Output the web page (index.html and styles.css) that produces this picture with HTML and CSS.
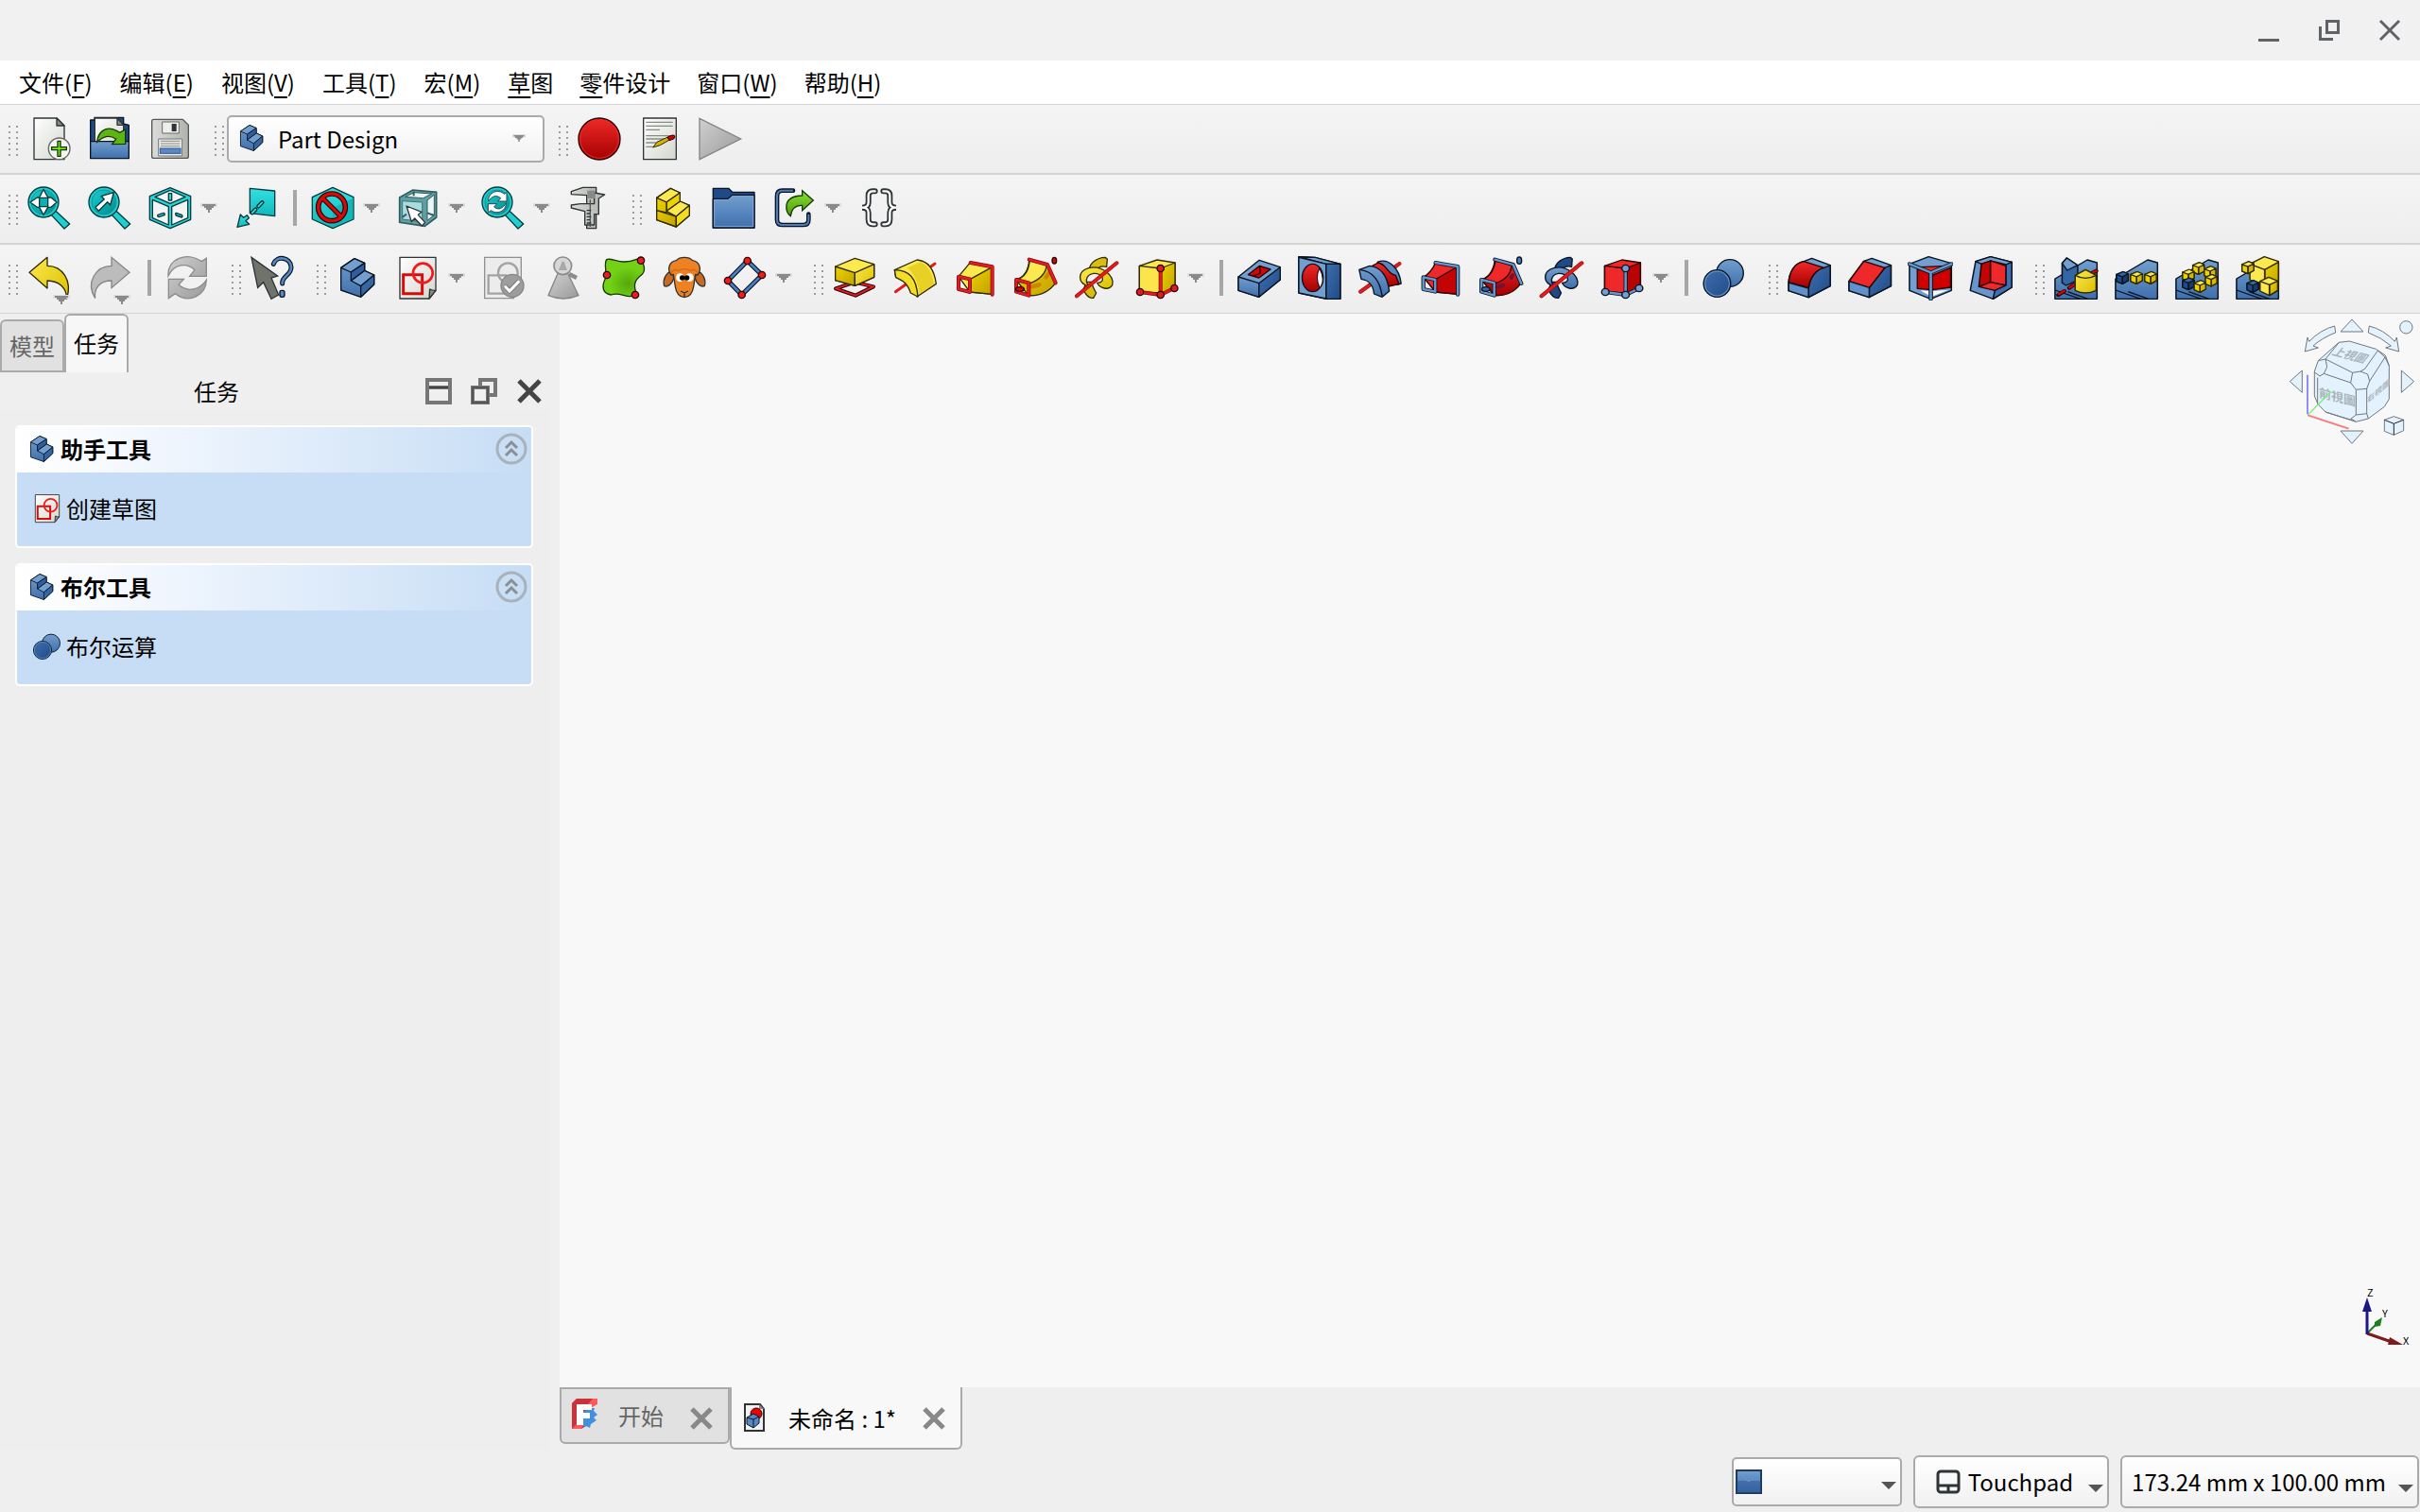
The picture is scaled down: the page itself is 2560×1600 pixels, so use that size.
FILE: index.html
```html
<!DOCTYPE html>
<html lang="zh-CN">
<head>
<meta charset="utf-8">
<title>Part Design</title>
<link rel="stylesheet" href="styles.css">
</head>
<body>
<svg class="defs" aria-hidden="true">
<defs>
<linearGradient id="gy" x1="0" y1="0" x2="1" y2="1"><stop offset="0" stop-color="#fce94f"/><stop offset="1" stop-color="#dcc000"/></linearGradient>
<linearGradient id="gyd" x1="0" y1="0" x2="1" y2="1"><stop offset="0" stop-color="#edd400"/><stop offset="1" stop-color="#c4a000"/></linearGradient>
<linearGradient id="gb" x1="0" y1="0" x2="0" y2="1"><stop offset="0" stop-color="#729fcf"/><stop offset="1" stop-color="#3f6fae"/></linearGradient>
<linearGradient id="gbd" x1="0" y1="0" x2="1" y2="1"><stop offset="0" stop-color="#3f6fae"/><stop offset="1" stop-color="#204a87"/></linearGradient>
<linearGradient id="gr" x1="0" y1="0" x2="0" y2="1"><stop offset="0" stop-color="#ef2929"/><stop offset="1" stop-color="#a40000"/></linearGradient>
<linearGradient id="gc" x1="0" y1="0" x2="0" y2="1"><stop offset="0" stop-color="#34e0e2"/><stop offset="1" stop-color="#0fb8bb"/></linearGradient>
<linearGradient id="gcd" x1="0" y1="0" x2="1" y2="1"><stop offset="0" stop-color="#16d0d2"/><stop offset="1" stop-color="#068a8c"/></linearGradient>
<linearGradient id="gg" x1="0" y1="0" x2="0" y2="1"><stop offset="0" stop-color="#8ae234"/><stop offset="1" stop-color="#4e9a06"/></linearGradient>
<linearGradient id="gn" x1="0" y1="0" x2="1" y2="1"><stop offset="0" stop-color="#d0d0d0"/><stop offset="1" stop-color="#9a9a9a"/></linearGradient>
<linearGradient id="gp" x1="0" y1="0" x2="1" y2="1"><stop offset="0" stop-color="#ffffff"/><stop offset="1" stop-color="#d3d7cf"/></linearGradient>
<linearGradient id="gm" x1="0" y1="0" x2="1" y2="0"><stop offset="0" stop-color="#dcdcda"/><stop offset="1" stop-color="#b0b3ac"/></linearGradient>
<radialGradient id="ggr" cx=".6" cy=".65" r=".45"><stop offset="0" stop-color="#56a80a"/><stop offset="1" stop-color="#73d216"/></radialGradient>

<symbol id="handle" viewBox="0 0 26 48"><path d="M15 10h2v2h-2zM15 16h2v2h-2zM15 22h2v2h-2zM15 28h2v2h-2zM15 34h2v2h-2zM15 40h2v2h-2zM23 10h2v2h-2zM23 16h2v2h-2zM23 22h2v2h-2zM23 28h2v2h-2zM23 34h2v2h-2zM23 40h2v2h-2z" fill="#9c9c9c"/></symbol>
<symbol id="arrow" viewBox="0 0 18 10"><path d="M0 0H18V4H0z" fill="#dedede"/><path d="M2 1H16V3H14V5H12V7H10V10H8V7H6V5H4V3H2z" fill="#8a8a8a"/></symbol>

<symbol id="new" viewBox="84 36 144 144"><path d="M108 42H180L204 66V173H108Z" class="k" fill="url(#gp)"/><path d="M180 42V66H204Z" class="k" fill="#888a85"/><circle cx="188" cy="139" r="34" fill="#f4f4f2" stroke="#666" stroke-width="4"/><path d="M183 115h9v19h19v9h-19v20h-9v-20h-19v-9h19z" fill="#73e61e" stroke="#173606" stroke-width="4"/></symbol>
<symbol id="open" viewBox="276 36 144 144"><path d="M287 48H300V40H392V60L409 64V120H287Z" class="b" fill="#204a87"/><path d="M301 42H372L392 64V130H301Z" class="k" fill="url(#gp)"/><path d="M372 42V64H392Z" class="k" fill="#888a85"/><path d="M287 116H409V170H287Z" class="b" fill="url(#gb)"/><path d="M308 118C311 86 335 64 370 82L380 88L398 78V124L356 125L368 108C345 94 328 100 308 118Z" fill="#5cb512" stroke="#173606" stroke-width="4"/></symbol>
<symbol id="save" viewBox="468 36 144 144"><path d="M488 46H580L598 64V164Q598 169 592 169H488Q482 169 482 164V52Q482 46 488 46Z" fill="url(#gm)" stroke="#555753" stroke-width="4"/><path d="M515 54H568V90H515Z" fill="#eee" stroke="#6b6d69" stroke-width="3"/><rect x="545" y="60" width="15" height="24" fill="#2e3436"/><path d="M503 108H578V162H503Z" fill="#e8e8e6" stroke="#777" stroke-width="3"/><path d="M510 115H571M510 123H571M510 131H571" stroke="#8c8e8a" stroke-width="3"/><rect x="508" y="138" width="65" height="16" fill="#5b87c4" stroke="#31599b" stroke-width="3"/></symbol>
<symbol id="rec" viewBox="390 36 144 144"><circle cx="462" cy="108" r="66" class="r" fill="url(#gr)"/><circle cx="462" cy="108" r="61" fill="none" stroke="#ef2929" stroke-width="3"/></symbol>
<symbol id="edit" viewBox="582 36 144 144"><path d="M602 42H706V173H602Z" class="k" fill="url(#gp)"/><path d="M610 55H695M610 67H695M610 79H654M610 98H690M610 108H670M610 120H650M610 133H632" stroke="#888a85" stroke-width="4"/><path d="M632 135L645 118L688 98L694 106L655 128Z" fill="#d5b208" stroke="#332900" stroke-width="3"/><path d="M678 103L694 96Q702 95 702 102L698 108L684 113Z" fill="#c00" stroke="#280000" stroke-width="3"/></symbol>
<symbol id="play" viewBox="774 36 144 144"><path d="M780 43L911 108L780 173Z" fill="url(#gn)" stroke="#858585" stroke-width="4"/></symbol>

<symbol id="lens" viewBox="0 0 144 144"><path d="M76 91L89 78L137 123L120 138Z" class="c" fill="#1fd0d3"/><circle cx="54" cy="54" r="48" class="c" fill="#19cdd0"/><circle cx="54" cy="54" r="39" fill="url(#gcd)" stroke="#0d9698" stroke-width="3"/></symbol>
<symbol id="fitall" viewBox="84 258 144 144"><use href="#lens" x="84" y="258" width="144" height="144"/><path d="M138 271L152 297H162L180 312L162 328H152L138 352L125 328H118L96 312L118 297H125Z" class="c" fill="#fff"/><rect x="125" y="298" width="27" height="28" class="c" fill="#0fb0b3"/></symbol>
<symbol id="fitsel" viewBox="276 258 144 144"><use href="#lens" x="276" y="258" width="144" height="144"/><path d="M361 281L350 321L341 311L313 340L303 328L331 302L321 293Z" class="c" fill="#fff"/></symbol>
<symbol id="iso" viewBox="468 258 144 144"><path d="M540 266L605 293V367L540 395L475 367V293Z" class="c" fill="#27d5d8"/><path d="M540 274L588 295L540 316L492 295ZM484 304L535 326V384L484 362ZM596 304L545 326V384L596 362Z" class="c" fill="#f4f4f4"/><path d="M535 284h10v22h-10zM501 352l18-6q6 2 3 7l-18 6q-6-2-3-7zM559 346l18 6q4 5 0 8l-18-6q-4-5 0-8z" class="c" fill="#27d5d8"/></symbol>
<symbol id="ortho" viewBox="738 258 144 144"><path d="M793 268L872 276V356L793 347Z" class="c" fill="url(#gc)"/><path d="M832 313L820 325M811 335L800 346" stroke="#082d2e" stroke-width="13" stroke-linecap="round"/><path d="M832 313L820 325M811 335L800 346" stroke="#34e0e2" stroke-width="5" stroke-linecap="round"/><path d="M753 391L763 351L773 361L784 353L790 362L780 371L791 382Z" class="c" fill="url(#gc)"/></symbol>
<symbol id="style" viewBox="984 258 144 144"><path d="M1056 265L1122 296V366L1056 395L991 366V296Z" class="c" fill="url(#gc)"/><path d="M1056 330L1120 300V364L1056 392Z" fill="#10b7ba"/><circle cx="1053" cy="328" r="43" fill="none" stroke="#280000" stroke-width="17"/><path d="M1023 298L1083 358" stroke="#280000" stroke-width="16"/><circle cx="1053" cy="328" r="43" fill="none" stroke="#d40a0a" stroke-width="10"/><path d="M1023 298L1083 358" stroke="#d40a0a" stroke-width="10"/></symbol>
<symbol id="selbox" viewBox="1254 258 144 144"><path d="M1268 297L1310 273L1385 280V360L1348 388L1268 376Z" fill="#5f9ea2" stroke="#315e61" stroke-width="5"/><path d="M1286 295L1314 281L1370 285L1343 299ZM1356 306L1378 288V352L1356 370Z" fill="#edf4f4" stroke="#315e61" stroke-width="3"/><path d="M1277 308L1340 312V374L1277 366Z" fill="#a8dcdf" stroke="#3f7477" stroke-width="3"/><path d="M1313 278V292M1276 360L1290 350M1356 346L1378 354" stroke="#315e61" stroke-width="6"/><path d="M1290 324L1338 343L1327 352L1349 376L1339 387L1316 363L1306 374Z" class="k" fill="#fff"/></symbol>
<symbol id="sync" viewBox="84 258 144 144"><use href="#lens" x="84" y="258" width="144" height="144"/><path d="M110 309C108 280 142 268 160 286L168 281V309H140L149 299C134 287 121 293 110 309ZM166 314C167 342 136 352 118 338L109 345V317H137L128 327C142 339 157 331 166 314Z" fill="#fff" stroke="#25474a" stroke-width="3"/></symbol>
<symbol id="caliper" viewBox="354 258 144 144"><path d="M373 278L410 265H452V395H422V290L373 287Z" fill="url(#gm)" class="k"/><path d="M373 321L402 317H446V282L479 288L460 300V350H446V384H416V341L373 330Z" fill="url(#gm)" class="k"/><path d="M424 275H448V300H424Z" fill="#888a85"/><path d="M433 304V390" stroke="#555" stroke-width="4"/><path d="M422 338H436M422 348H432M422 358H436M422 368H432M422 378H436" stroke="#2e3436" stroke-width="4"/></symbol>
<symbol id="partyellow" viewBox="624 258 144 144"><path d="M644 298L688 268L718 282V309L748 322V354L706 390L644 368Z" class="y" fill="url(#gyd)"/><path d="M644 298L688 268L718 282L675 312ZM675 340L718 309L748 322L706 357Z" class="y" fill="#fce94f"/><path d="M675 312L718 282V309L675 340Z" class="y" fill="#edd400"/><path d="M644 298L675 312V345L644 338ZM644 338L706 357V390L644 368Z" class="y" fill="url(#gyd)"/><path d="M706 357L748 322V354L706 390Z" class="y" fill="#f2dc1e"/></symbol>
<symbol id="folder" viewBox="816 258 144 144"><path d="M823 268H872L884 280H954V393H823Z" class="b" fill="#204a87"/><path d="M823 301H870L884 289H954V393H823Z" class="b" fill="url(#gb)"/><path d="M827 305H872L886 293H950V389H827Z" fill="none" stroke="#7ea7d6" stroke-width="3"/></symbol>
<symbol id="link" viewBox="1008 258 144 144"><path d="M1077 275H1042Q1026 275 1026 293V368Q1026 384 1044 384H1108Q1126 384 1126 368V350" fill="none" stroke="#0b1521" stroke-width="14" stroke-linecap="round"/><path d="M1077 275H1042Q1026 275 1026 293V368Q1026 384 1044 384H1108Q1126 384 1126 368V350" fill="none" stroke="#4a7ebf" stroke-width="6"/><path d="M1106 275L1141 306L1106 338V322Q1074 320 1069 356Q1053 345 1056 320Q1062 292 1106 291Z" fill="url(#gg)" stroke="#173606" stroke-width="4"/></symbol>
<symbol id="braces" viewBox="1278 258 144 144"><path d="M1337 277H1330Q1316 277 1316 291V313Q1316 329 1296 329Q1316 329 1316 345V367Q1316 382 1330 382H1337M1363 277H1370Q1384 277 1384 291V313Q1384 329 1404 329Q1384 329 1384 345V367Q1384 382 1370 382H1363" fill="none" stroke="#2e3436" stroke-width="18" stroke-linecap="round"/><path d="M1337 277H1330Q1316 277 1316 291V313Q1316 329 1296 329Q1316 329 1316 345V367Q1316 382 1330 382H1337M1363 277H1370Q1384 277 1384 291V313Q1384 329 1404 329Q1384 329 1384 345V367Q1384 382 1370 382H1363" fill="none" stroke="#fff" stroke-width="7" stroke-linecap="round"/></symbol>

<symbol id="undo" viewBox="84 480 144 144"><path d="M150 487V514C198 514 230 560 212 618C211 585 190 562 150 561V585L93 535Z" class="y" fill="url(#gy)"/></symbol>
<symbol id="redo" viewBox="276 480 144 144"><path d="M354 487V514C306 514 270 565 302 617C298 586 315 561 354 561V584L411 535Z" fill="#bcbcbc" stroke="#868686" stroke-width="4"/></symbol>
<symbol id="refresh" viewBox="522 480 144 144"><path d="M534 546C530 490 595 468 640 500L655 490V547H602L618 527C592 502 552 508 534 546ZM655 559C654 608 600 636 556 602L535 617V556H583L567 574C596 600 634 590 655 559Z" fill="url(#gn)" stroke="#8b8b8b" stroke-width="4"/></symbol>
<symbol id="what" viewBox="792 480 144 144"><path d="M798 487L881 546L861 552L884 606L861 619L836 566L818 583Z" fill="#70736c" stroke="#2e3436" stroke-width="4"/><path d="M868 508C878 480 922 486 924 518C925 545 894 545 896 570" fill="none" stroke="#0b1521" stroke-width="15" stroke-linecap="round"/><path d="M868 508C878 480 922 486 924 518C925 545 894 545 896 570" fill="none" stroke="#5688c4" stroke-width="8" stroke-linecap="round"/><rect x="888" y="592" width="15" height="21" rx="6" class="b" fill="#5688c4"/></symbol>
<symbol id="part" viewBox="1062 480 144 144"><path d="M1082 520L1125 491L1157 505V529L1187 543V573L1145 613L1082 591Z" class="b" fill="url(#gb)"/><path d="M1082 520L1125 491L1157 505L1114 534ZM1114 561L1157 529L1187 543L1145 578Z" class="b" fill="#729fcf"/><path d="M1114 534L1157 505V529L1114 561Z" class="b" fill="#2f5d9d"/><path d="M1145 578L1187 543V573L1145 613Z" class="b" fill="#3465a4"/></symbol>
<symbol id="sketch" viewBox="1254 480 144 144"><path d="M1269 487H1383V592L1362 618H1269Z" class="k" fill="url(#gp)"/><path d="M1362 618L1364 588Q1374 593 1383 592Z" class="k" fill="#888a85"/><path d="M1280 542H1340V602H1280Z" fill="none" stroke="#d80a0a" stroke-width="9"/><circle cx="1342" cy="537" r="31" fill="none" stroke="#ef1c1c" stroke-width="8"/></symbol>
<symbol id="validate" viewBox="84 480 144 144"><path d="M98 487H214V560L190 617H98Z" fill="#ececec" stroke="#909090" stroke-width="4"/><path d="M110 544H166V602H110Z" fill="none" stroke="#a2a2a2" stroke-width="7"/><circle cx="172" cy="536" r="31" fill="none" stroke="#a2a2a2" stroke-width="7"/><circle cx="186" cy="577" r="36" fill="#9d9d9d" stroke="#868686" stroke-width="4"/><path d="M162 578L177 594L208 562" fill="none" stroke="#787878" stroke-width="15"/><path d="M162 578L177 594L208 562" fill="none" stroke="#fff" stroke-width="9"/></symbol>
<symbol id="check" viewBox="276 480 144 144"><path d="M330 538H362L396 608Q348 628 300 608Z" fill="url(#gn)" stroke="#858585" stroke-width="4"/><path d="M366 540L390 552" stroke="#8b8b8b" stroke-width="13"/><circle cx="346" cy="514" r="28" fill="#d7d7d7" stroke="#8b8b8b" stroke-width="5"/><path d="M333 528L344 500H350L360 528Z" fill="#a8a8a8"/></symbol>
<symbol id="binder" viewBox="468 480 144 144"><path d="M485 494C505 486 530 514 580 493C600 486 612 525 598 541C568 563 572 580 580 604C552 624 530 594 500 606C472 602 468 580 482 552C487 530 475 510 485 494Z" fill="url(#ggr)" stroke="#173606" stroke-width="4"/><circle cx="594" cy="497" r="11" class="r" fill="#ef1c1c"/><circle cx="486" cy="543" r="11" class="r" fill="#ef1c1c"/><circle cx="576" cy="606" r="11" class="r" fill="#ef1c1c"/></symbol>
<symbol id="clone" viewBox="660 480 144 144"><path d="M694 530C674 534 662 558 668 578C680 582 692 572 698 554ZM770 530C790 534 802 558 796 578C784 582 772 572 766 554Z" class="k" fill="#c96a20"/><path d="M690 543C676 524 684 500 706 497C718 484 746 484 758 497C780 500 788 524 774 543L767 541L761 580Q756 612 732 614Q708 612 703 580L697 541Z" class="k" fill="#f08122"/><path d="M690 536Q700 520 712 530Q732 518 752 530Q764 520 774 536" fill="none" stroke="#c96a20" stroke-width="4"/><circle cx="718" cy="551" r="13" fill="#fff"/><circle cx="748" cy="551" r="13" fill="#fff"/><circle cx="725" cy="552" r="8"/><circle cx="740" cy="552" r="8"/><path d="M720 594L732 600L744 594M732 600V612" fill="none" class="k"/></symbol>
<symbol id="datum" viewBox="852 480 144 144"><path d="M932 498L978 543L914 606L870 561Z" fill="none" stroke="#0b1521" stroke-width="15"/><path d="M932 498L978 543L914 606L870 561Z" fill="none" stroke="#4a7ebf" stroke-width="8"/><circle cx="932" cy="498" r="11" class="r" fill="#ef1c1c"/><circle cx="978" cy="543" r="11" class="r" fill="#ef1c1c"/><circle cx="914" cy="606" r="11" class="r" fill="#ef1c1c"/><circle cx="870" cy="561" r="11" class="r" fill="#ef1c1c"/></symbol>

<symbol id="pad" viewBox="90 60 144 144"><path d="M102 166L163 146L222 160L165 188Z" fill="none" stroke="#280000" stroke-width="12" stroke-linejoin="round"/><path d="M102 166L163 146L222 160L165 188Z" fill="none" stroke="#e01b24" stroke-width="6" stroke-linejoin="round"/><path d="M101 96L163 70L224 89V130L163 157L101 140Z" class="y" fill="#fce94f"/><path d="M101 96L163 116V157L101 140Z" class="y" fill="url(#gyd)"/><path d="M163 116L224 89V130L163 157Z" class="y" fill="url(#gy)"/></symbol>
<symbol id="revolve" viewBox="282 60 144 144"><path d="M292 176L417 87" class="ax"/><path d="M289 107L360 75C395 78 415 105 421 151L360 192C352 160 335 140 293 130Z" class="y" fill="#fce94f"/><path d="M330 100L372 82C394 92 410 120 414 152L368 183C364 145 350 118 330 100Z" fill="#e0c414" opacity=".7"/><path d="M289 107C335 108 358 130 363 192L340 180C330 150 318 142 293 131Z" class="y" fill="#f4de2a"/></symbol>
<symbol id="loft" viewBox="474 60 144 144"><path d="M492 128L530 82L600 97V184L528 177Z" class="y" fill="#fce94f"/><path d="M528 137L600 97V184L528 177Z" class="y" fill="url(#gyd)"/><path d="M530 84L599 97V185M492 128L528 136V177L492 168Z" class="ro" fill="none"/><path d="M530 84L599 97V185M492 128L528 136V177L492 168Z" class="ri" fill="none"/></symbol>
<symbol id="pipe" viewBox="666 60 144 144"><path d="M674 138C700 130 714 110 716 74L774 90L800 148C775 182 745 190 714 188Z" class="y" fill="url(#gyd)"/><path d="M680 136C702 130 714 110 718 78L772 90C770 118 748 140 716 150Z" class="y" fill="#fce94f"/><path d="M725 160L748 154M770 130L778 118" stroke="#cf8206" stroke-width="13" stroke-linecap="round"/><path d="M716 74L774 90L800 148M675 138L715 148V188L675 176Z" class="ro" fill="none"/><path d="M716 74L774 90L800 148M675 138L715 148V188L675 176Z" class="ri" fill="none"/><ellipse cx="687" cy="168" rx="13" ry="7" class="r" fill="#d40a0a"/><ellipse cx="796" cy="77" rx="7" ry="10" class="r" fill="#d40a0a"/></symbol>
<symbol id="helix" viewBox="858 60 144 144"><path d="M906 106C910 85 930 68 957 67L964 72L962 97C940 92 930 104 926 112Z" class="y" fill="#d9bd10"/><path d="M900 145L888 168C895 185 905 198 920 196L929 180C920 165 916 155 914 145Z" class="y" fill="#d9bd10"/><path d="M908 160C868 150 868 112 905 101C945 90 988 125 980 155C968 174 940 165 932 148C962 148 950 116 920 118C892 124 894 148 908 160Z" class="y" fill="url(#gy)"/><path d="M867 190L994 85" class="axo"/><path d="M867 190L994 85" class="ax"/></symbol>
<symbol id="prim" viewBox="1050 60 144 144"><path d="M1066 94L1122 75L1179 84V158L1133 186L1066 177Z" class="y" fill="#fce94f"/><path d="M1133 102L1179 84V158L1133 186Z" class="y" fill="url(#gyd)"/><path d="M1066 94L1133 102V180L1066 177Z" class="y" fill="#fbe54a"/><path d="M1068 177L1133 186L1176 165M1133 186V102" class="ro" fill="none"/><path d="M1068 177L1133 186L1176 165M1133 186V102" class="ri" fill="none"/><g class="r" fill="#e01b24"><circle cx="1133" cy="102" r="11"/><circle cx="1068" cy="177" r="11"/><circle cx="1133" cy="186" r="11"/><circle cx="1177" cy="165" r="11"/></g></symbol>

<symbol id="pocket" viewBox="50.4 60 134.4 144" preserveAspectRatio="none"><path d="M56 129L118 76L180 98V138L117 193L56 172Z" class="b" fill="#729fcf"/><path d="M56 129L117 149V193L56 172Z" class="b" fill="url(#gb)"/><path d="M117 149L180 98V138L117 193Z" class="b" fill="url(#gbd)"/><path d="M85 122L119 94L151 105L117 132Z" class="r" fill="#cc0808"/><path d="M120 95V118L100 126" class="r" fill="none"/></symbol>
<symbol id="hole" viewBox="229.6 60 134.4 144" preserveAspectRatio="none"><path d="M235 65L283 67L358 88V199H316L235 180Z" class="b" fill="#4a7ebf"/><path d="M235 65L316 88L358 88L283 67Z" class="b" fill="#729fcf"/><path d="M235 67L316 88V198L235 180Z" class="b" fill="#729fcf"/><path d="M316 88H358V199H316Z" class="b" fill="url(#gbd)"/><ellipse cx="276" cy="132" rx="31" ry="44" class="b" fill="url(#gr)"/><path d="M296 101C309 125 309 150 297 164C288 145 288 120 296 101Z" fill="#f4f4ff" stroke="#280000" stroke-width="3"/></symbol>
<symbol id="groove" viewBox="408.8 60 134.4 144" preserveAspectRatio="none"><path d="M418 176L533 87" class="axo"/><path d="M418 176L533 87" class="ax"/><path d="M468 82C500 68 533 100 538 150L526 154C505 120 490 112 468 82Z" class="b" fill="#5688c4"/><path d="M446 98L470 84C496 88 496 120 522 124L532 152L498 160Q490 120 446 98Z" class="r" fill="url(#gr)"/><path d="M414 106L445 94C480 98 498 130 503 174L482 193L458 183C455 155 445 140 420 136Z" class="b" fill="url(#gb)"/><path d="M418 107C455 112 475 140 482 190" class="b" fill="none"/></symbol>
<symbol id="subloft" viewBox="588 60 134.4 144" preserveAspectRatio="none"><path d="M604 130Q630 112 640 83L706 96V184L640 177Z" class="r" fill="#ef2929"/><path d="M640 137L706 96V184L640 177Z" class="r" fill="#c40404"/><path d="M640 84L706 96V185M604 130L639 138V176L604 168Z" class="bo" fill="none"/><path d="M640 84L706 96V185M604 130L639 138V176L604 168Z" class="bi" fill="none"/></symbol>
<symbol id="subpipe" viewBox="767.2 60 134.4 144" preserveAspectRatio="none"><path d="M776 138C800 130 812 110 816 74L868 90L894 148C870 182 845 190 814 188Z" class="r" fill="url(#gr)"/><path d="M780 136C800 130 812 110 818 78L866 90C864 118 846 140 816 150Z" class="r" fill="#ef2929"/><path d="M826 160L840 156M864 132L868 124" stroke="#751037" stroke-width="12" stroke-linecap="round"/><path d="M816 74L870 90L894 150M776 138L814 148V188L776 176Z" class="bo" fill="none"/><path d="M816 74L870 90L894 150M776 138L814 148V188L776 176Z" class="bi" fill="none"/><ellipse cx="789" cy="168" rx="12" ry="7" class="b" fill="#3465a4"/><ellipse cx="888" cy="77" rx="7" ry="11" class="b" fill="#4a7ebf"/></symbol>
<symbol id="subhelix" viewBox="946.4 60 134.4 144" preserveAspectRatio="none"><path d="M992 106C996 85 1014 68 1039 67L1045 72L1043 97C1024 92 1014 104 1010 112Z" class="b" fill="#204a87"/><path d="M986 145L974 168C981 185 991 198 1004 196L1012 180C1004 165 1000 155 999 145Z" class="b" fill="#204a87"/><path d="M994 160C956 150 956 112 990 101C1027 90 1067 125 1060 155C1048 174 1023 165 1015 148C1044 148 1032 116 1004 118C978 124 980 148 994 160Z" class="b" fill="url(#gb)"/><path d="M954 190L1073 85" class="axo"/><path d="M954 190L1073 85" class="ax"/></symbol>
<symbol id="subprim" viewBox="1125.6 60 134.4 144" preserveAspectRatio="none"><path d="M1141 94L1192 75L1247 84V158L1203 186L1141 177Z" class="r" fill="#ef2929"/><path d="M1203 102L1247 84V158L1203 186Z" class="r" fill="#b80303"/><path d="M1141 94L1203 102V180L1141 177Z" class="r" fill="#ef2929"/><path d="M1143 177L1203 186L1244 165M1203 186V102" class="bo" fill="none"/><path d="M1143 177L1203 186L1244 165M1203 186V102" class="bi" fill="none"/><g class="b" fill="#729fcf"><circle cx="1203" cy="102" r="11"/><circle cx="1143" cy="177" r="11"/><circle cx="1203" cy="186" r="11"/><circle cx="1243" cy="165" r="11"/></g></symbol>
<symbol id="boolean" viewBox="1428 60 134.4 144" preserveAspectRatio="none"><ellipse cx="1512" cy="117" rx="40" ry="43" class="b" fill="url(#gb)"/><ellipse cx="1474" cy="150" rx="40" ry="43" class="b" fill="url(#gbd)"/><ellipse cx="1474" cy="150" rx="36" ry="39" fill="none" stroke="#6696cd" stroke-width="3"/></symbol>

<symbol id="fillet" viewBox="104.5 60 125.4 144" preserveAspectRatio="none"><path d="M110 147C112 115 125 85 152 80L174 70L225 92V158L165 194L110 173Z" class="b" fill="#729fcf"/><path d="M165 163C170 130 185 105 208 100L225 92V158L165 194Z" class="b" fill="url(#gbd)"/><path d="M110 147C112 115 125 85 152 80L208 100C185 105 170 130 165 163Z" class="r" fill="url(#gr)"/><path d="M110 147L165 165V194L110 173Z" class="b" fill="#5f92cc"/></symbol>
<symbol id="chamfer" viewBox="271.8 60 125.4 144" preserveAspectRatio="none"><path d="M277 143L318 79L340 70L393 92V158L332 194L277 173Z" class="b" fill="#729fcf"/><path d="M333 163L376 100L393 92V158L332 194Z" class="b" fill="url(#gbd)"/><path d="M277 143L318 79L376 100L333 163Z" class="r" fill="#ef2929"/><path d="M277 143L333 163V194L277 173Z" class="b" fill="#5f92cc"/></symbol>
<symbol id="draft" viewBox="439 60 125.4 144" preserveAspectRatio="none"><path d="M444 88L497 65L560 86V172L503 199L444 172Z" class="b" fill="#729fcf"/><path d="M466 103L503 120V170L466 166ZM507 124L558 100V162L507 170Z" class="r" fill="#d00000"/><path d="M470 98L550 94L503 114Z" class="r" fill="#ef2929"/><path d="M474 172L500 174V188ZM509 174L552 170L509 190Z" fill="#fff"/><path d="M444 88L503 115L560 88M503 115V199" fill="none" class="bo"/><path d="M444 88L503 115L560 88M503 115V199" fill="none" class="bi"/></symbol>
<symbol id="thick" viewBox="606.2 60 125.4 144" preserveAspectRatio="none"><path d="M627 80L668 65L727 82V162L675 199L612 172Z" class="b" fill="#6696cd"/><path d="M627 80L668 65L727 82L711 90L668 78L643 88Z" class="b" fill="#729fcf"/><path d="M643 88L668 78V146L636 160Z" class="r" fill="#c40404"/><path d="M668 78L711 94V156L668 146Z" class="r" fill="#ef2929"/><path d="M636 160L668 146L711 156L680 172Z" class="r" fill="#ef2929"/><path d="M680 172L711 156V90L727 82V162L675 199Z" class="b" fill="#3f6fae"/></symbol>

<symbol id="plane" viewBox="0 0 125.4 144" preserveAspectRatio="none"><path d="M5 75L94 15L121 24V139H5Z" class="b" fill="url(#gb)"/><path d="M5 111L75 139M40 116L96 139" class="b" fill="none"/></symbol>
<symbol id="cy" viewBox="0 0 36 42"><path d="M2 11L20 2L34 9V30L18 40L2 32Z" class="y" fill="#fce94f"/><path d="M18 18L34 9V30L18 40Z" class="y" fill="#d9b900"/><path d="M2 11L18 18V40L2 32Z" class="y" fill="#edd400"/></symbol>
<symbol id="cb" viewBox="0 0 36 42"><path d="M2 11L20 2L34 9V30L18 40L2 32Z" class="b" fill="#3465a4"/><path d="M18 18L34 9V30L18 40Z" class="b" fill="#173a70"/><path d="M2 11L18 18V40L2 32Z" class="b" fill="#204a87"/></symbol>
<symbol id="mirror" viewBox="841.4 60 125.4 144" preserveAspectRatio="none"><use href="#plane" x="841.4" y="60" width="125.4" height="144"/><path d="M866 86L879 69L909 92V140L877 156L866 148Z" class="b" fill="#3465a4"/><path d="M866 86L880 108L909 92L879 69Z" class="b" fill="#729fcf"/><path d="M856 186L872 174M886 164L898 154M950 116L960 110" stroke="#280000" stroke-width="12" stroke-linecap="round"/><path d="M857 184L872 174M887 163L898 154M951 115L960 110" stroke="#cc0808" stroke-width="7" stroke-linecap="round"/><path d="M902 124L931 106L960 124V172Q931 188 902 172Z" class="y" fill="url(#gy)"/><path d="M902 124Q931 142 960 124" class="y" fill="none"/></symbol>
<symbol id="linear" viewBox="1008.6 60 125.4 144" preserveAspectRatio="none"><use href="#plane" x="1008.6" y="60" width="125.4" height="144"/><use href="#cb" x="1014" y="110" width="37" height="43"/><use href="#cy" x="1053" y="110" width="37" height="43"/><use href="#cy" x="1092" y="110" width="37" height="43"/></symbol>
<symbol id="polar" viewBox="1175.9 60 125.4 144" preserveAspectRatio="none"><use href="#plane" x="1175.9" y="60" width="125.4" height="144"/><use href="#cy" x="1225" y="81" width="36" height="42"/><use href="#cy" x="1197" y="103" width="36" height="42"/><use href="#cy" x="1257" y="93" width="36" height="42"/><use href="#cy" x="1260" y="119" width="36" height="42"/><use href="#cb" x="1197" y="130" width="36" height="42"/><use href="#cy" x="1229" y="138" width="36" height="42"/></symbol>
<symbol id="multi" viewBox="1343.1 60 125.4 144" preserveAspectRatio="none"><use href="#plane" x="1343.1" y="60" width="125.4" height="144"/><path d="M1385 88L1425 65L1464 80V142L1426 160L1385 138Z" class="y" fill="#fce94f"/><path d="M1426 106L1464 82V142L1426 160Z" class="y" fill="url(#gyd)"/><path d="M1385 88L1426 106V156" class="y" fill="none"/><use href="#cy" x="1361" y="78" width="37" height="43"/><use href="#cb" x="1375" y="138" width="36" height="42"/><path d="M1413 143L1437 130L1462 142V172L1439 188L1413 174Z" class="y" fill="#fce94f"/><path d="M1439 154L1462 142V172L1439 188Z" class="y" fill="url(#gyd)"/><path d="M1413 143L1439 154V188" class="y" fill="none"/></symbol>
<symbol id="chev" viewBox="0 0 34 34"><circle cx="17" cy="17" r="15" fill="none" stroke="#a9b2bb" stroke-width="3"/><path d="M11 16L17 10L23 16M11 24L17 18L23 24" fill="none" stroke="#8a8f94" stroke-width="3"/></symbol>
<symbol id="cross" viewBox="0 0 24 24"><path d="M2 2L22 22M22 2L2 22" stroke="currentColor" stroke-width="5"/></symbol>
</defs>
</svg>

<header class="titlebar">
<button aria-label="最小化"><svg viewBox="0 0 24 24"><path d="M1 22.500H23" stroke-width="3"/></svg></button>
<button aria-label="还原"><svg viewBox="0 0 24 24"><path d="M9.500 2.500H21.500V14.500H9.500ZM2.500 8V21.500H16" stroke-width="3"/></svg></button>
<button aria-label="关闭"><svg viewBox="0 0 24 24"><path d="M2 2L22 22M22 2L2 22" stroke-width="3"/></svg></button>
</header>
<nav class="menubar">
<button>文件(<u>F</u>)</button><button>编辑(<u>E</u>)</button><button>视图(<u>V</u>)</button><button>工具(<u>T</u>)</button><button>宏(<u>M</u>)</button><button><u>草</u>图</button><button><u>零</u>件设计</button><button>窗口(<u>W</u>)</button><button>帮助(<u>H</u>)</button>
</nav>

<div class="toolbar first">
<svg class="handle"><use href="#handle"/></svg>
<button class="tool" aria-label="新建"><svg><use href="#new"/></svg></button>
<button class="tool" aria-label="打开"><svg><use href="#open"/></svg></button>
<button class="tool" aria-label="保存"><svg><use href="#save"/></svg></button>
<svg class="handle"><use href="#handle"/></svg>
<div class="combo workbench"><svg class="lead"><use href="#part"/></svg><select aria-label="工作台"><option>Part Design</option></select><svg class="tri"><use href="#arrow"/></svg></div>
<svg class="handle"><use href="#handle"/></svg>
<button class="tool" aria-label="录制宏"><svg><use href="#rec"/></svg></button>
<button class="tool" aria-label="宏"><svg><use href="#edit"/></svg></button>
<button class="tool" aria-label="执行宏"><svg><use href="#play"/></svg></button>
</div>

<div class="toolbar">
<svg class="handle"><use href="#handle"/></svg>
<button class="tool" aria-label="显示全部"><svg><use href="#fitall"/></svg></button>
<button class="tool" aria-label="显示选择"><svg><use href="#fitsel"/></svg></button>
<button class="tool" aria-label="等轴测"><svg><use href="#iso"/></svg></button>
<button class="drop" aria-label="视图选项"><svg><use href="#arrow"/></svg></button>
<button class="tool" aria-label="对齐视图"><svg><use href="#ortho"/></svg></button>
<span class="sep"></span>
<button class="tool" aria-label="绘图样式"><svg><use href="#style"/></svg></button>
<button class="drop" aria-label="样式选项"><svg><use href="#arrow"/></svg></button>
<button class="tool" aria-label="选择"><svg><use href="#selbox"/></svg></button>
<button class="drop" aria-label="选择选项"><svg><use href="#arrow"/></svg></button>
<button class="tool" aria-label="同步视图"><svg><use href="#sync"/></svg></button>
<button class="drop" aria-label="同步选项"><svg><use href="#arrow"/></svg></button>
<button class="tool" aria-label="测量"><svg><use href="#caliper"/></svg></button>
<svg class="handle"><use href="#handle"/></svg>
<button class="tool" aria-label="创建零件"><svg><use href="#partyellow"/></svg></button>
<button class="tool" aria-label="创建组"><svg><use href="#folder"/></svg></button>
<button class="tool" aria-label="创建链接"><svg><use href="#link"/></svg></button>
<button class="drop" aria-label="链接选项"><svg><use href="#arrow"/></svg></button>
<button class="tool" aria-label="变量集"><svg><use href="#braces"/></svg></button>
</div>

<div class="toolbar">
<svg class="handle"><use href="#handle"/></svg>
<button class="tool" aria-label="撤销"><svg><use href="#undo"/></svg><svg class="more"><use href="#arrow"/></svg></button>
<button class="tool" aria-label="重做"><svg><use href="#redo"/></svg><svg class="more"><use href="#arrow"/></svg></button>
<span class="sep"></span>
<button class="tool" aria-label="刷新"><svg><use href="#refresh"/></svg></button>
<svg class="handle"><use href="#handle"/></svg>
<button class="tool" aria-label="这是什么"><svg><use href="#what"/></svg></button>
<svg class="handle"><use href="#handle"/></svg>
<button class="tool" aria-label="创建实体"><svg><use href="#part"/></svg></button>
<button class="tool" aria-label="创建草图"><svg><use href="#sketch"/></svg></button>
<button class="drop" aria-label="草图选项"><svg><use href="#arrow"/></svg></button>
<button class="tool" aria-label="验证草图"><svg><use href="#validate"/></svg></button>
<button class="tool" aria-label="检查几何体"><svg><use href="#check"/></svg></button>
<button class="tool" aria-label="形状绑定"><svg><use href="#binder"/></svg></button>
<button class="tool" aria-label="克隆"><svg><use href="#clone"/></svg></button>
<button class="tool" aria-label="基准"><svg><use href="#datum"/></svg></button>
<button class="drop" aria-label="基准选项"><svg><use href="#arrow"/></svg></button>
<svg class="handle"><use href="#handle"/></svg>
<button class="tool" aria-label="凸台"><svg><use href="#pad"/></svg></button>
<button class="tool" aria-label="旋转"><svg><use href="#revolve"/></svg></button>
<button class="tool" aria-label="放样"><svg><use href="#loft"/></svg></button>
<button class="tool" aria-label="扫掠"><svg><use href="#pipe"/></svg></button>
<button class="tool" aria-label="螺旋"><svg><use href="#helix"/></svg></button>
<button class="tool" aria-label="图元"><svg><use href="#prim"/></svg></button>
<button class="drop" aria-label="图元选项"><svg><use href="#arrow"/></svg></button>
<span class="sep"></span>
<button class="tool" aria-label="凹坑"><svg><use href="#pocket"/></svg></button>
<button class="tool" aria-label="孔"><svg><use href="#hole"/></svg></button>
<button class="tool" aria-label="凹槽"><svg><use href="#groove"/></svg></button>
<button class="tool" aria-label="减料放样"><svg><use href="#subloft"/></svg></button>
<button class="tool" aria-label="减料扫掠"><svg><use href="#subpipe"/></svg></button>
<button class="tool" aria-label="减料螺旋"><svg><use href="#subhelix"/></svg></button>
<button class="tool" aria-label="减料图元"><svg><use href="#subprim"/></svg></button>
<button class="drop" aria-label="减料图元选项"><svg><use href="#arrow"/></svg></button>
<span class="sep"></span>
<button class="tool" aria-label="布尔运算"><svg><use href="#boolean"/></svg></button>
<svg class="handle"><use href="#handle"/></svg>
<button class="tool" aria-label="圆角"><svg><use href="#fillet"/></svg></button>
<button class="tool" aria-label="倒角"><svg><use href="#chamfer"/></svg></button>
<button class="tool" aria-label="拔模"><svg><use href="#draft"/></svg></button>
<button class="tool" aria-label="厚度"><svg><use href="#thick"/></svg></button>
<svg class="handle"><use href="#handle"/></svg>
<button class="tool" aria-label="镜像"><svg><use href="#mirror"/></svg></button>
<button class="tool" aria-label="线性阵列"><svg><use href="#linear"/></svg></button>
<button class="tool" aria-label="环形阵列"><svg><use href="#polar"/></svg></button>
<button class="tool" aria-label="多重变换"><svg><use href="#multi"/></svg></button>
</div>

<main class="work">
<aside class="side">
<div class="sidetabs"><button>模型</button><button class="on">任务</button></div>
<div class="sidetitle"><h2>任务</h2>
<button aria-label="折叠"><svg viewBox="0 0 28 28"><path d="M2 2H26V26H2ZM2 10H26" fill="none" stroke="#777" stroke-width="4"/><path d="M4 10H24" stroke="#444" stroke-width="2"/></svg></button>
<button aria-label="浮动"><svg viewBox="0 0 28 28"><path d="M10 9V2H26V18H19M2 10H18V26H2Z" fill="none" stroke="#777" stroke-width="4"/><path d="M2 10H18V26H2Z" fill="none" stroke="#555" stroke-width="2"/></svg></button>
<button aria-label="关闭"><svg viewBox="0 0 28 28"><path d="M3 3L25 25M25 3L3 25" stroke="#444" stroke-width="5"/></svg></button>
</div>
<div class="tasks">
<section class="group"><div class="ghead"><svg class="ic"><use href="#part"/></svg><h3>助手工具</h3><button aria-label="收起"><svg><use href="#chev"/></svg></button></div><div class="gbody"><button><svg class="ic"><use href="#sketch"/></svg>创建草图</button></div></section>
<section class="group"><div class="ghead"><svg class="ic"><use href="#part"/></svg><h3>布尔工具</h3><button aria-label="收起"><svg><use href="#chev"/></svg></button></div><div class="gbody"><button><svg class="ic"><use href="#boolean"/></svg>布尔运算</button></div></section>
</div>
</aside>
<div class="center">
<div class="view">
<svg class="navcube" viewBox="180 1000 420 420">
<g class="nav">
<path d="M384 1015L420 1054H348ZM384 1409L420 1369H348ZM187 1212L226 1177V1247ZM581 1212L541 1177V1247Z"/>
<circle cx="556" cy="1040" r="20"/>
<path d="M329 1036L332 1057Q290 1073 261 1099L277 1105L235 1117L243 1072L248 1085Q285 1047 329 1036ZM439 1036L436 1057Q478 1073 508 1099L491 1105L533 1117L526 1072L520 1085Q484 1047 439 1036Z"/>
<path d="M343 1088L376 1084L460 1109L490 1129L502 1162V1268L487 1292L436 1330L397 1340L300 1309L276 1284L265 1258V1180L277 1146Z"/>
<path d="M275 1200V1284M300 1141L386 1184L380 1216L295 1187L305 1166ZM277 1146L300 1141L343 1088M386 1184L411 1180L434 1189L440 1211L431 1235L397 1238L380 1216M425 1172L466 1114L489 1135L440 1211M411 1180L425 1172M397 1238V1318L381 1330L397 1340M431 1235V1314L397 1318M431 1314L436 1330M300 1309L385 1335M295 1187L282 1195L267 1184M489 1135L502 1162" fill="none"/>
<path d="M517 1323L548 1334V1368L517 1382L487 1370V1334Z"/><path d="M487 1334L517 1346L548 1334M517 1346V1382" stroke="#222"/>
</g>
<g class="cubetext" font-size="39"><text transform="translate(318 1127) rotate(14) skewX(-24)" font-size="36">上視圖</text><text transform="translate(279 1261) skewY(14)">前視圖</text><text transform="translate(432 1281) skewY(-40)" font-size="24">右視圖</text></g>
<path d="M243 1191V1316" stroke="#7a7af8" stroke-width="5"/><path d="M244 1318L318 1244" stroke="#7af07a" stroke-width="4"/><path d="M244 1319L374 1362" stroke="#f87a7a" stroke-width="6"/>
</svg>
<svg class="axis" viewBox="0 0 70 80"><path d="M14 51L24 41" stroke="#1a801a" stroke-width="2"/><path d="M30 34L28 43L22 44L22 39Z" fill="#1a801a"/><path d="M14 51L40 60" stroke="#801a1a" stroke-width="3"/><path d="M38 55L52 63L36 63Z" fill="#801a1a"/><path d="M14 52V26" stroke="#1a1a80" stroke-width="3"/><path d="M14 13L19 28H9Z" fill="#1a1a80"/><text x="14" y="12">Z</text><text x="30" y="34">Y</text><text x="52" y="63">X</text></svg>
</div>
<div class="doctabs">
<div class="doctab"><svg class="flogo" viewBox="0 0 27 32"><path d="M5 0H27V6L18 11H0V5Z" fill="#ff585d"/><path d="M5 0H22L17 6V28L10 32H0V5Z" fill="#cb333b"/><path d="M0 32L8 24H12V28L10 32Z" fill="#ff585d"/><path d="M12 30V14L18 10H24L23 13L27 17L23 20L26 23L20 27L19 31L15 29Z" fill="#418fde"/><path d="M5 6H21V12H12V15H19V21H12V28H5Z" fill="#fff"/></svg><span>开始</span><button aria-label="关闭开始"><svg><use href="#cross"/></svg></button></div>
<div class="doctab on"><svg class="dlogo" viewBox="0 0 22 30"><path d="M1 1H17L21 6V29H1Z" class="k1" fill="#f2f2f0"/><path d="M16 1V6H21Z" fill="#888"/><circle cx="13" cy="11" r="6" fill="#e00" stroke="#300"/><path d="M3 15L10 11L16 14V21L10 26L3 22Z" fill="#5688c4" stroke="#0b1521"/><path d="M3 15L10 17L16 14M10 17V26" fill="none" stroke="#0b1521"/></svg><span>未命名 : 1*</span><button aria-label="关闭文档"><svg><use href="#cross"/></svg></button></div>
</div>
</div>
</main>
<footer class="status">
<div class="combo notify"><svg class="lead" viewBox="0 0 28 26"><path d="M1 1H27V25H1Z" fill="url(#gb)" stroke="#20395c" stroke-width="2"/><path d="M1 25V12H27V25Z" fill="#204a87" opacity=".4"/><path d="M2 2L14 13L26 2" fill="none" stroke="#6b97cf"/></svg><select aria-label="通知"><option></option></select><svg class="tri2" viewBox="0 0 16 8"><path d="M0 0H16L8 8Z"/></svg></div>
<button class="stbtn touch"><svg class="pad" viewBox="0 0 26 26"><rect x="2" y="2" width="22" height="22" rx="3" fill="none" stroke="#2e3436" stroke-width="3"/><path d="M2 17H24M13 17V24" stroke="#2e3436" stroke-width="3"/></svg><span>Touchpad</span><svg class="tri2" viewBox="0 0 16 8"><path d="M0 0H16L8 8Z"/></svg></button>
<button class="stbtn dims"><span>173.24 mm x 100.00 mm</span><svg class="tri2" viewBox="0 0 16 8"><path d="M0 0H16L8 8Z"/></svg></button>
</footer>
</body>
</html>
```

FILE: styles.css
```css
* { box-sizing: border-box; }
body {
  margin: 0;
  min-height: 100vh;
  display: flex;
  flex-direction: column;
  background: #efefef;
  color: #000;
  font: 24px/36px "Noto Sans CJK SC", "Noto Sans", sans-serif;
}
button, select { font: inherit; color: inherit; }
button { border: 0; padding: 0; background: none; }
svg { display: block; flex: none; }
h2, h3 { margin: 0; font-size: 24px; }
.defs { position: absolute; width: 0; height: 0; }

/* shared icon outlines */
.k { stroke: #2e3436; stroke-width: 4; stroke-linejoin: round; }
.k1 { stroke: #2e3436; stroke-width: 2; }
.b { stroke: #0b1521; stroke-width: 4; stroke-linejoin: round; }
.y { stroke: #302b00; stroke-width: 4; stroke-linejoin: round; }
.r { stroke: #280000; stroke-width: 4; stroke-linejoin: round; }
.c { stroke: #063a3c; stroke-width: 4; stroke-linejoin: round; }
.axo { stroke: #8c0a0a; stroke-width: 12; stroke-linecap: round; }
.ax { stroke: #e01b1b; stroke-width: 9; stroke-linecap: round; }
.ro { stroke: #7c0a0a; stroke-width: 12; stroke-linejoin: round; stroke-linecap: round; }
.ri { stroke: #e01b24; stroke-width: 8; stroke-linejoin: round; stroke-linecap: round; }
.bo { stroke: #0b1521; stroke-width: 12; stroke-linejoin: round; stroke-linecap: round; }
.bi { stroke: #6696cd; stroke-width: 7; stroke-linejoin: round; stroke-linecap: round; }

.titlebar {
  height: 64px;
  display: flex;
  justify-content: flex-end;
  align-items: center;
  gap: 40px;
  padding-right: 20px;
  background: #f1f1f1;
}
.titlebar svg { width: 24px; height: 24px; fill: none; stroke: #5f6368; }

.menubar { height: 46px; display: flex; align-items: center; padding-left: 5px; background: #fff; }
.menubar button { padding: 0 14px 0 15px; }
.menubar button:nth-child(n+6) { padding-right: 13px; }
.menubar u { text-decoration-thickness: 2px; text-underline-offset: 5px; }

.toolbar {
  height: 74px;
  display: flex;
  align-items: center;
  padding-bottom: 2px;
  border-top: 1px solid #d4d4d4;
  border-bottom: 1px solid #d4d4d4;
  background: linear-gradient(#f4f4f4, #eeeeee);
}
.toolbar.first { padding-bottom: 0; }
.handle { width: 26px; height: 48px; }
.handle:first-child { margin-left: -6px; }
.tool { position: relative; width: 64px; height: 64px; padding: 8px; flex: none; }
.tool svg { width: 48px; height: 48px; }
.tool .more { position: absolute; right: 10px; bottom: 4px; width: 18px; height: 10px; }
.drop { width: 26px; flex: none; }
.drop svg { width: 18px; height: 10px; }
.sep { width: 4px; height: 38px; margin: 0 6px 0 8px; background: #a6a6a6; }

.combo { position: relative; }
.combo select {
  appearance: none;
  width: 100%;
  height: 100%;
  border: 2px solid #aaa;
  border-radius: 5px;
  background: linear-gradient(#fff, #f1f1f1);
}
.combo svg { position: absolute; pointer-events: none; }
.workbench { width: 336px; height: 50px; margin-left: 2px; }
.workbench select { padding-left: 52px; }
.workbench .lead { left: 10px; top: 8px; width: 32px; height: 32px; }
.workbench .tri { right: 20px; top: 20px; width: 14px; height: 8px; }

.work { flex: 1; display: flex; }
.side { width: 592px; flex: none; display: flex; flex-direction: column; }
.sidetabs { display: flex; align-items: flex-end; height: 62px; }
.sidetabs button {
  width: 68px;
  height: 56px;
  border: 2px solid #aaa;
  border-radius: 6px 6px 0 0;
  background: #e1e1e1;
  color: #666;
}
.sidetabs .on { height: 62px; border-bottom: 0; padding-bottom: 2px; background: #f7f7f7; color: #000; }
.sidetitle { height: 40px; display: flex; align-items: center; gap: 20px; padding: 0 18px 0 28px; }
.sidetitle h2 { flex: 1; text-align: center; font-weight: 400; }
.sidetitle svg { width: 28px; height: 28px; }
.tasks {
  flex: 1;
  margin-right: 12px;
  padding: 16px;
  display: flex;
  flex-direction: column;
  gap: 16px;
  background: #eee;
}
.group { border: 2px solid #fff; border-radius: 5px; overflow: hidden; background: #c6ddf5; }
.ghead {
  height: 48px;
  display: flex;
  align-items: center;
  gap: 4px;
  padding: 0 4px 2px 10px;
  background: linear-gradient(90deg, #fff, #f2f7fe 25%, #c6ddf5);
}
.ghead h3 { flex: 1; }
.ghead button svg { width: 34px; height: 34px; }
.ic { width: 32px; height: 32px; }
.gbody { height: 78px; padding: 20px 0 0 16px; }
.gbody button { display: flex; align-items: center; gap: 4px; height: 36px; }

.center { flex: 1; display: flex; flex-direction: column; }
.view { position: relative; flex: 1; background: #f8f8f8; }
.navcube { position: absolute; right: 0; top: 1px; width: 140px; height: 140px; }
.nav { fill: #e3f2fd; stroke: #70787e; stroke-width: 3; }
.cubetext { fill: #a9b4bb; font-family: "Noto Sans CJK TC", sans-serif; font-weight: 700; }
.axis { position: absolute; right: 0; bottom: 28px; width: 70px; height: 80px; font-size: 11px; }

.doctabs { height: 66px; display: flex; align-items: flex-start; }
.doctab {
  height: 60px;
  display: flex;
  align-items: center;
  padding: 0 16px 0 11px;
  border: 2px solid #aaa;
  border-radius: 0 0 6px 6px;
  background: #e1e1e1;
  color: #666;
}
.doctab.on { height: 66px; border-top: 0; padding: 0 16px 0 13px; background: #f8f8f8; color: #000; }
.doctab span { margin: 0 28px 0 22px; }
.doctab.on span { margin-left: 25px; padding-top: 1px; }
.doctab button svg { width: 24px; height: 24px; color: #888; }
.doctab button { padding-top: 5px; }
.doctab.on button { padding-top: 2px; }
.flogo { width: 27px; height: 32px; margin-bottom: 4px; }
.dlogo { width: 22px; height: 30px; }

.status { height: 66px; display: flex; justify-content: flex-end; align-items: center; gap: 12px; padding: 2px 1px 0 0; }
.tri2 { width: 16px; height: 8px; fill: #555; }
.notify { width: 180px; height: 52px; }
.notify .lead { left: 4px; top: 13px; width: 28px; height: 26px; }
.notify .tri2 { right: 6px; top: 26px; }
.stbtn {
  height: 56px;
  display: flex;
  align-items: center;
  border: 2px solid #aaa;
  border-radius: 6px;
  background: linear-gradient(#fff, #f1f1f1);
}
.stbtn .tri2 { margin-top: 14px; }
.touch { gap: 8px; padding: 0 4px 0 22px; }
.touch .tri2 { margin-left: 8px; }
.pad { width: 26px; height: 26px; }
.dims { gap: 13px; padding: 0 4px 0 10px; }
```
